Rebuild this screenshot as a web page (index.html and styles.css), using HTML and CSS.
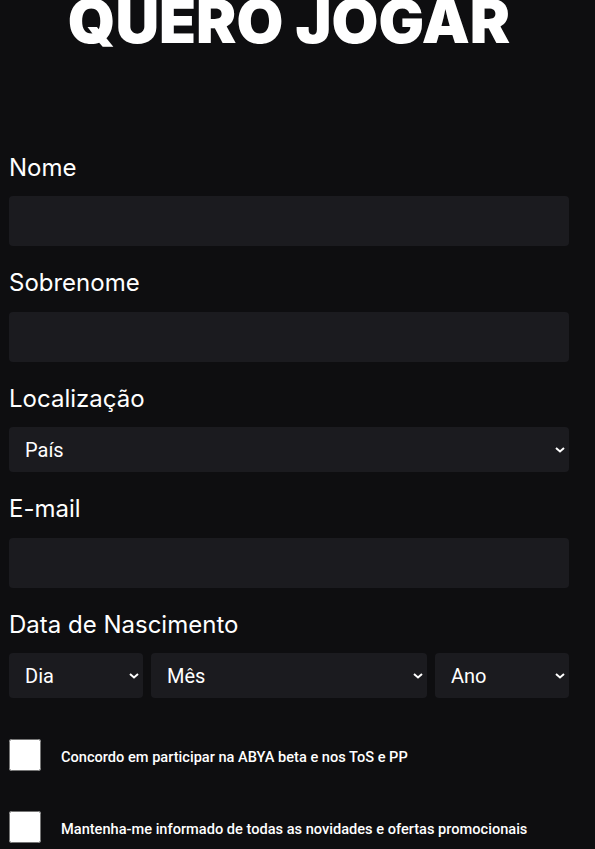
FILE: index.html
```html
<!DOCTYPE html>
<html lang="pt-BR">

<head>
    <meta charset="UTF-8">
    <meta name="viewport" content="width=device-width, initial-scale=1.0">
    <title>Quero Jogar</title>

    <link rel="stylesheet" href="styles.css">
</head>

<body>
    <div class="container">
        <h1 class="title">QUERO JOGAR</h1>

        <form class="signup">
            <div class="field">
                <label for="nome">Nome</label>
                <input type="text" id="nome" class="input">
            </div>

            <div class="field">
                <label for="sobrenome">Sobrenome</label>
                <input type="text" id="sobrenome" class="input">
            </div>

            <div class="field">
                <label for="pais">Localização</label>
                <div class="select-wrapper">
                    <select id="pais" class="select">
                        <option>País</option>
                    </select>
                    <svg class="chevron" viewBox="0 0 10 6" width="10" height="6">
                        <path d="M1 1l4 3.5L9 1" fill="none" stroke="#fff" stroke-width="2" />
                    </svg>
                </div>
            </div>

            <div class="field">
                <label for="email">E-mail</label>
                <input type="email" id="email" class="input">
            </div>

            <div class="field">
                <label for="dia">Data de Nascimento</label>
                <div class="birth">
                    <div class="select-wrapper">
                        <select id="dia" class="select">
                            <option>Dia</option>
                        </select>
                        <svg class="chevron" viewBox="0 0 10 6" width="10" height="6">
                            <path d="M1 1l4 3.5L9 1" fill="none" stroke="#fff" stroke-width="2" />
                        </svg>
                    </div>
                    <div class="select-wrapper">
                        <select class="select">
                            <option>Mês</option>
                        </select>
                        <svg class="chevron" viewBox="0 0 10 6" width="10" height="6">
                            <path d="M1 1l4 3.5L9 1" fill="none" stroke="#fff" stroke-width="2" />
                        </svg>
                    </div>
                    <div class="select-wrapper">
                        <select class="select">
                            <option>Ano</option>
                        </select>
                        <svg class="chevron" viewBox="0 0 10 6" width="10" height="6">
                            <path d="M1 1l4 3.5L9 1" fill="none" stroke="#fff" stroke-width="2" />
                        </svg>
                    </div>
                </div>
            </div>

            <div class="checks">
                <label class="check">
                    <input type="checkbox">
                    <span>Concordo em participar na ABYA beta e nos ToS e PP</span>
                </label>
                <label class="check">
                    <input type="checkbox">
                    <span>Mantenha-me informado de todas as novidades e ofertas promocionais</span>
                </label>
            </div>
        </form>
    </div>
</body>

</html>
```

FILE: styles.css
```css
* {
    box-sizing: border-box;
    margin: 0;
    padding: 0;
}

body {
    background-color: #0e0e10;
    color: #ffffff;
    font-family: Inter, "Noto Sans", sans-serif;
}

.container {
    width: 560px;
    margin-left: 9px;
    padding-bottom: 60px;
}

.title {
    font-family: Inter, sans-serif;
    font-weight: 900;
    font-size: 60.5px;
    line-height: 0.72;
    text-align: center;
    margin-bottom: 109px;
}

/* form fields */
.field {
    margin-bottom: 22px;
}

.field > label {
    display: block;
    font-size: 24px;
    line-height: 29.5px;
    font-weight: 400;
    margin-bottom: 14px;
}

.input,
.select {
    display: block;
    width: 100%;
    background-color: #1b1b1f;
    border: 0;
    border-radius: 4px;
    color: #ffffff;
    outline: none;
}

.input {
    height: 50px;
    padding: 0 16px;
    font-size: 18px;
}

.select-wrapper {
    position: relative;
}

.select {
    height: 45px;
    padding: 0 30px 0 16px;
    font-family: Roboto, sans-serif;
    font-size: 20px;
    appearance: none;
    -webkit-appearance: none;
}

.chevron {
    position: absolute;
    right: 4px;
    top: 20px;
    pointer-events: none;
}

.birth {
    display: grid;
    grid-template-columns: 134px 1fr 134px;
    gap: 8px;
}

/* checkboxes */
.checks {
    margin-top: 41px;
    display: flex;
    flex-direction: column;
    gap: 40px;
}

.check {
    display: flex;
    align-items: center;
    gap: 20px;
    font-family: Roboto, sans-serif;
    font-size: 14.6px;
    font-weight: 500;
}

.check input {
    width: 32px;
    height: 32px;
    margin: 0;
    flex-shrink: 0;
}

.check span {
    padding-top: 3px;
}
```
